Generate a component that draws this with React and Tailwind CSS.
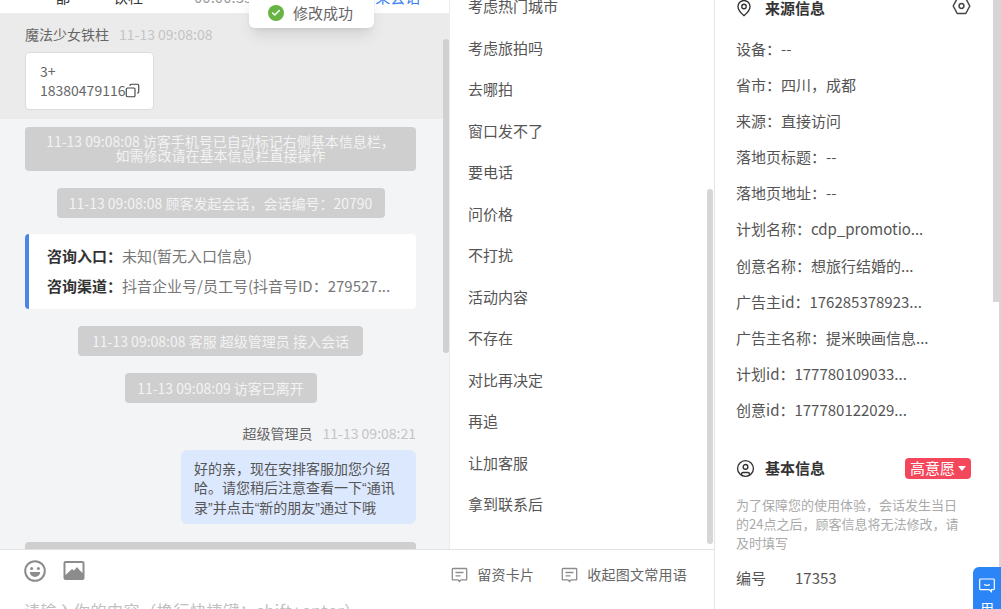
import React from 'react'
import { MapPin, CircleUser, Copy, Check } from 'lucide-react'

const phrases = ['考虑热门城市', '考虑旅拍吗', '去哪拍', '窗口发不了', '要电话', '问价格', '不打扰', '活动内容', '不存在', '对比再决定', '再追', '让加客服', '拿到联系后']

const sourceRows = [
  '设备：--',
  '省市：四川，成都',
  '来源：直接访问',
  '落地页标题：--',
  '落地页地址：--',
  '计划名称：cdp_promotio...',
  '创意名称：想旅行结婚的...',
  '广告主id：176285378923...',
  '广告主名称：提米映画信息...',
  '计划id：177780109033...',
  '创意id：177780122029...',
]

const SystemMsg = ({ children, className }) => (
  <div className={`bg-[#cfcfcf] rounded-sm text-[#f3f3f3] text-sm text-center ${className}`}>{children}</div>
)

const Quote = ({ children }) => <span className="font-['Liberation_Sans',sans-serif]">{children}</span>

const ChatIcon = () => (
  <svg width="17" height="17" viewBox="0 0 17 17" fill="none" stroke="#8c8c8c" strokeWidth="1.3">
    <path d="M2 2.5h13a.7.7 0 0 1 .7.7v10a.7.7 0 0 1-.7.7h-5l-1.5 1.6-1.5-1.6H2a.7.7 0 0 1-.7-.7v-10a.7.7 0 0 1 .7-.7z" />
    <path d="M4.5 6.5h8M4.5 9.8h5" />
  </svg>
)

export default function App() {
  return (
    <div className="relative flex w-[1001px] h-[609px] overflow-hidden bg-white text-[#555] font-['Noto_Sans_CJK_SC',sans-serif]">

      {/* ── left + middle ── */}
      <div className="w-[714px] shrink-0 flex flex-col">
        <div className="h-[550px] flex shrink-0 border-b border-[#e2e2e2]">

          {/* chat */}
          <div className="w-[450px] shrink-0 flex flex-col bg-[#f3f4f6] border-r border-[#ececec] overflow-hidden">
            <div className="h-[13px] shrink-0 overflow-hidden bg-white shadow-sm">
              <div className="flex text-[15px] leading-[20px] -mt-[13px] text-[#333] whitespace-nowrap">
                <span className="ml-[55px]">都</span>
                <span className="ml-[43px]">铁柱</span>
                <span className="ml-[51px] text-[#999]">00:00:35</span>
                <span className="ml-[108px] text-[#3b82f6]">结束会话</span>
              </div>
            </div>

            <div className="h-[106px] shrink-0 bg-[#ebebeb] pl-[25px] pt-[11px]">
              <div className="flex text-sm leading-5 gap-[10px]">
                <span className="text-[#666]">魔法少女铁柱</span>
                <span className="text-[#c4c4c4]">11-13 09:08:08</span>
              </div>
              <div className="mt-2 w-[129px] h-[58px] bg-white border border-[#dcdcdc] rounded pl-[14px] pt-[9px] text-sm leading-[19px] text-[#666]">
                <div>3+</div>
                <div className="flex items-center whitespace-nowrap">
                  18380479116
                  <Copy size={15} strokeWidth={1.8} className="text-[#444] -scale-x-100 shrink-0" />
                </div>
              </div>
            </div>

            <div className="flex flex-col items-center w-[391px] ml-[25px]">
              <SystemMsg className="mt-2 w-full h-[44px] pt-[7px] leading-[14px]">
                11-13 09:08:08 访客手机号已自动标记右侧基本信息栏，<br />如需修改请在基本信息栏直接操作
              </SystemMsg>
              <SystemMsg className="mt-[17px] w-[328px] h-[30px] leading-[30px]">
                11-13 09:08:08 顾客发起会话，会话编号：20790
              </SystemMsg>
              <div className="mt-4 w-full h-[75px] bg-white border-l-4 border-[#4a86e8] rounded-sm pl-[18px] pt-[7px] text-[15px] text-[#777]">
                <div className="leading-[30px]"><b className="text-[#333]">咨询入口：</b>未知(暂无入口信息)</div>
                <div className="leading-[30px] whitespace-nowrap"><b className="text-[#333]">咨询渠道：</b>抖音企业号/员工号(抖音号ID：279527...</div>
              </div>
              <SystemMsg className="mt-[17px] w-[285px] h-[30px] leading-[30px]">
                11-13 09:08:08 客服 超级管理员 接入会话
              </SystemMsg>
              <SystemMsg className="mt-[17px] w-[192px] h-[30px] leading-[30px]">
                11-13 09:08:09 访客已离开
              </SystemMsg>
              <div className="mt-5 w-full flex justify-end gap-[10px] text-sm leading-5">
                <span className="text-[#666]">超级管理员</span>
                <span className="text-[#c4c4c4]">11-13 09:08:21</span>
              </div>
              <div className="mt-[7px] self-end w-[235px] h-[74px] bg-[#dce8fd] rounded-md px-[13px] pt-[9px] text-sm leading-[19px] text-[#555]">
                好的亲，现在安排客服加您介绍哈。请您稍后注意查看一下<Quote>“</Quote>通讯录<Quote>”</Quote>并点击<Quote>“</Quote>新的朋友<Quote>”</Quote>通过下哦
              </div>
              <div className="mt-[18px] w-full h-[30px] bg-[#cfcfcf] rounded-sm shrink-0" />
            </div>
          </div>

          {/* common phrases */}
          <div className="flex-1 overflow-hidden pl-[18px] -mt-[15px] text-[15px] text-[#555]">
            {phrases.map(p => (
              <div key={p} className="h-[41.5px] leading-[41.5px]">{p}</div>
            ))}
          </div>
        </div>

        {/* composer */}
        <div className="flex-1 pl-6 pt-[10px] relative">
          <div className="flex items-start justify-between">
            <div className="flex gap-[17px]">
              <svg width="22" height="22" viewBox="0 0 22 22" fill="none">
                <circle cx="11" cy="11" r="9.8" stroke="#8c8c8c" strokeWidth="2" />
                <circle cx="7.6" cy="8.4" r="1.5" fill="#8c8c8c" />
                <circle cx="14.4" cy="8.4" r="1.5" fill="#8c8c8c" />
                <path d="M5.8 12h10.4a5.2 5 0 0 1-10.4 0z" fill="#8c8c8c" />
              </svg>
              <svg width="22" height="22" viewBox="0 0 22 22">
                <rect x="0.5" y="1" width="21" height="19" rx="2" fill="#8c8c8c" />
                <path d="M2.5 3h17v10l-3-3-2.5-3-3 3.5-2-1.5-6.5 6z" fill="#fff" />
              </svg>
            </div>
            <div className="flex items-center mt-[4px] mr-[27px] text-sm leading-5 tracking-[0.25px] text-[#666]">
              <ChatIcon />
              <span className="ml-[9px]">留资卡片</span>
              <span className="ml-[27px]"><ChatIcon /></span>
              <span className="ml-[9px]">收起图文常用语</span>
            </div>
          </div>
          <div className="mt-[16px] text-base leading-5 tracking-[0.6px] text-[#c0c0c0] whitespace-nowrap">
            请输入你的内容（换行快捷键：shift+enter）
          </div>
        </div>
      </div>

      {/* ── customer info ── */}
      <div className="flex-1 border-l border-[#e4e4e4] pl-[21px] pr-[30px] text-[15px] text-[#555] overflow-hidden">
        <div className="flex items-center justify-between h-[18px] -mt-px">
          <div className="flex items-center gap-[5px] font-bold text-[#333]">
            <MapPin size={18} strokeWidth={1.8} className="text-[#333] -ml-[1px] mr-[7px]" />
            来源信息
          </div>
          <svg width="19" height="18" viewBox="0 0 19 18" fill="none" stroke="#444" strokeWidth="1.5" className="-mt-[4px]">
            <path d="M5.2 1.5h8.6l4 7.5-4 7.5H5.2l-4-7.5z" strokeLinejoin="round" />
            <circle cx="9.5" cy="9" r="2.4" />
          </svg>
        </div>
        <div className="mt-[14px]">
          {sourceRows.map(r => (
            <div key={r} className="h-[36.1px] leading-[36.1px] whitespace-nowrap">{r}</div>
          ))}
        </div>

        <div className="mt-[29px] flex items-center justify-between h-[22px]">
          <div className="flex items-center font-bold text-[#333]">
            <CircleUser size={19} strokeWidth={1.7} className="text-[#333] mr-[10px]" />
            基本信息
          </div>
          <div className="flex items-center gap-[3px] h-[21px] w-[66px] pl-[5px] bg-[#f5475b] text-white rounded-sm whitespace-nowrap">
            高意愿
            <span className="w-0 h-0 border-x-[4px] border-x-transparent border-t-[5px] border-t-white" />
          </div>
        </div>
        <p className="mt-[16px] w-[230px] text-[13px] leading-[19px] text-[#aaa]">
          为了保障您的使用体验，会话发生当日的24点之后，顾客信息将无法修改，请及时填写
        </p>
        <div className="mt-[16px] flex leading-5">
          <span className="w-[59px]">编号</span>
          <span>17353</span>
        </div>
      </div>

      {/* ── overlays ── */}
      <div className="absolute left-[249px] -top-[10px] w-[125px] h-[38px] bg-white rounded-md shadow-lg flex items-center pl-[19px] pt-[8px]">
        <span className="w-4 h-4 rounded-full bg-[#67b443] flex items-center justify-center">
          <Check size={10} strokeWidth={3.5} className="text-white" />
        </span>
        <span className="ml-[9px] text-[15px] text-[#666] whitespace-nowrap">修改成功</span>
      </div>

      <div className="absolute left-[443px] top-[39px] w-[6px] h-[314px] rounded-sm bg-[#d0d0d0]" />
      <div className="absolute left-[707px] top-[189px] w-[6px] h-[355px] rounded-sm bg-[#d6d6d6]" />
      <div className="absolute left-[993px] top-0 w-[7px] h-[302px] bg-[#d6d6d6]" />
      <div className="absolute left-[999px] top-0 w-[2px] h-full bg-[#d6d6d6]" />

      <div className="absolute left-[973px] top-[567px] w-[28px] h-[42px] overflow-hidden rounded-tl-md bg-[#2b85f7] flex flex-col items-center pt-[11px] text-white">
        <svg width="16" height="15" viewBox="0 0 16 15" fill="none" stroke="#fff" strokeWidth="1.2" className="shrink-0">
          <path d="M1.5 1h13a.8.8 0 0 1 .8.8v9a.8.8 0 0 1-.8.8h-2.2v2l-2.2-2H1.5a.8.8 0 0 1-.8-.8v-9a.8.8 0 0 1 .8-.8z" />
          <path d="M5 6.5q3 1.6 6 0" />
        </svg>
        <span className="text-sm leading-[20px] mt-[5px] shrink-0">用</span>
      </div>
    </div>
  )
}
